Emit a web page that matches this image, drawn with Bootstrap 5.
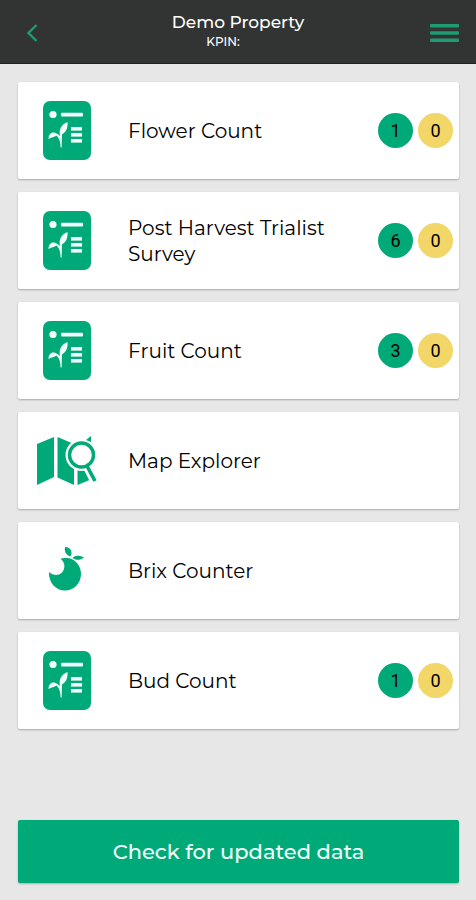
<!DOCTYPE html>
<html lang="en">
<head>
<meta charset="utf-8">
<meta name="viewport" content="width=device-width, initial-scale=1">
<title>Demo Property</title>
<link href="https://cdn.jsdelivr.net/npm/bootstrap@5.3.0/dist/css/bootstrap.min.css" rel="stylesheet">
<style>
  :root { --leaf: #00aa78; --sun: #f2d667; }
  body { background: #e7e7e7; font-family: Montserrat, Inter, "Open Sans", sans-serif; color: #000; }
  .topbar { background: #323433; height: 64px; border-bottom: 1px solid #1e201f; }
  .topbar .btn { color: #1d9c74; width: 64px; height: 64px; }
  .topbar h1 { font-size: 17px; line-height: 20px; font-weight: 500; }
  .kpin { font-size: 12px; line-height: 20px; font-weight: 500; padding-right: 30px; }
  .screen { padding: 18px 17px 17px 18px; }
  .tiles { gap: 13px; }
  .tile { min-height: 97px; border-radius: 2px; box-shadow: 0 1px 2px rgba(0,0,0,.28); color: #000; padding-right: 6px; }
  .tile-icon { width: 98px; }
  .tile-name { font-size: 20px; line-height: 26px; padding-left: 12px; }
  .counts { gap: 5px; margin-left: 40px; }
  .count { width: 35px; height: 35px; font-family: Roboto, sans-serif; font-size: 18px; }
  .count-done { background: var(--leaf); }
  .count-open { background: var(--sun); }
  .btn-update, .btn-update:hover { background: var(--leaf); color: #f2fffa; font-size: 21px; font-weight: 500; height: 63px; border-radius: 2px; border: 0; box-shadow: 0 1px 2px rgba(0,0,0,.25); }
</style>
<script src="https://cdn.jsdelivr.net/npm/bootstrap@5.3.0/dist/js/bootstrap.bundle.min.js" defer></script>
</head>
<body class="min-vh-100 d-flex flex-column">
<svg class="d-none" aria-hidden="true">
  <symbol id="survey" viewBox="0 0 50 60">
    <rect x="1" y="0" width="48" height="59" rx="7" fill="#00aa78"/>
    <g fill="#f3fffb">
      <circle cx="11" cy="13.500" r="3.600"/>
      <rect x="19" y="11.800" width="22" height="3.600" rx="1"/>
      <rect x="29" y="26" width="11" height="3.600"/>
      <rect x="29" y="32" width="11" height="3.600"/>
      <rect x="29" y="38" width="11" height="3.600"/>
      <path d="M25.500 21C20 23 16.500 28 18 34.500C23.500 32 26 28 25.500 21Z"/>
      <path d="M6.500 38C6.500 32 11 29.500 15.500 33L18 35L18.500 31.500L20 32L19.600 46.500H18.600C18.500 41 17.500 37 14.500 34.500C12.500 36.500 9 36 6.500 38Z"/>
    </g>
  </symbol>
</svg>

<header class="topbar d-flex justify-content-between align-items-start">
  <button type="button" class="btn border-0 p-0" aria-label="Back">
    <svg width="12" height="18" viewBox="0 0 12 18" fill="none" stroke="currentColor" stroke-width="2.400"><path d="M10.500 1L2.500 9L10.500 17"/></svg>
  </button>
  <div class="text-center text-white pt-2 mt-1">
    <h1 class="m-0">Demo Property</h1>
    <div class="kpin">KPIN:</div>
  </div>
  <button type="button" class="btn border-0 p-0" aria-label="Menu">
    <svg width="30" height="20" viewBox="0 0 30 20" fill="currentColor"><rect x="1" y="1" width="29" height="3.400" rx="1"/><rect x="1" y="8.300" width="29" height="3.400" rx="1"/><rect x="1" y="15.600" width="29" height="3.400" rx="1"/></svg>
  </button>
</header>

<main class="screen flex-grow-1 d-flex flex-column">
  <nav class="tiles d-flex flex-column" aria-label="Tools">
    <a href="#" class="tile bg-white d-flex align-items-center text-decoration-none">
      <span class="tile-icon text-center flex-shrink-0"><svg width="50" height="60"><use href="#survey"/></svg></span>
      <span class="tile-name flex-grow-1">Flower Count</span>
      <span class="counts d-flex flex-shrink-0"><span class="count count-done rounded-circle d-flex align-items-center justify-content-center">1</span><span class="count count-open rounded-circle d-flex align-items-center justify-content-center">0</span></span>
    </a>
    <a href="#" class="tile bg-white d-flex align-items-center text-decoration-none">
      <span class="tile-icon text-center flex-shrink-0"><svg width="50" height="60"><use href="#survey"/></svg></span>
      <span class="tile-name flex-grow-1">Post Harvest Trialist Survey</span>
      <span class="counts d-flex flex-shrink-0"><span class="count count-done rounded-circle d-flex align-items-center justify-content-center">6</span><span class="count count-open rounded-circle d-flex align-items-center justify-content-center">0</span></span>
    </a>
    <a href="#" class="tile bg-white d-flex align-items-center text-decoration-none">
      <span class="tile-icon text-center flex-shrink-0"><svg width="50" height="60"><use href="#survey"/></svg></span>
      <span class="tile-name flex-grow-1">Fruit Count</span>
      <span class="counts d-flex flex-shrink-0"><span class="count count-done rounded-circle d-flex align-items-center justify-content-center">3</span><span class="count count-open rounded-circle d-flex align-items-center justify-content-center">0</span></span>
    </a>
    <a href="#" class="tile bg-white d-flex align-items-center text-decoration-none">
      <span class="tile-icon text-center flex-shrink-0">
        <svg width="60" height="52" viewBox="0 0 60 52" fill="#00aa78">
          <path d="M0 9L17 2V42L0 50Z"/>
          <path d="M20.500 2L37 9V50L20.500 42.500Z"/>
          <path d="M40.500 22H55V44L40.500 50Z"/>
          <circle cx="44.500" cy="20" r="16" fill="#fff"/>
          <path d="M49 30L59 50" stroke="#fff" stroke-width="8"/>
          <path d="M49 5L54 1V7Z"/>
          <path d="M50 31L58 46" stroke="#00aa78" stroke-width="3.600"/>
          <circle cx="44.500" cy="20" r="12" fill="#fff" stroke="#00aa78" stroke-width="3.400"/>
        </svg>
      </span>
      <span class="tile-name flex-grow-1">Map Explorer</span>
    </a>
    <a href="#" class="tile bg-white d-flex align-items-center text-decoration-none">
      <span class="tile-icon text-center flex-shrink-0">
        <svg width="40" height="52" viewBox="0 0 40 52" fill="#00aa78">
          <path d="M13.500 14C16 12.800 22 12.500 25.500 14.500C30.500 17 34 22.500 34 29C34 38 27 45.500 18 45.500C9 45.500 1.500 38 2 27C6 30.500 11 31 14.500 28C18.500 24.500 18.500 17 13.500 14Z"/>
          <path d="M18 2C24 2.500 26 7 23.500 11.500C19.500 10.500 17 7 18 2Z"/>
          <path d="M25.500 13C28 10 32.500 10 37 12.500C33 15.500 29 15.500 25.500 13Z"/>
        </svg>
      </span>
      <span class="tile-name flex-grow-1">Brix Counter</span>
    </a>
    <a href="#" class="tile bg-white d-flex align-items-center text-decoration-none">
      <span class="tile-icon text-center flex-shrink-0"><svg width="50" height="60"><use href="#survey"/></svg></span>
      <span class="tile-name flex-grow-1">Bud Count</span>
      <span class="counts d-flex flex-shrink-0"><span class="count count-done rounded-circle d-flex align-items-center justify-content-center">1</span><span class="count count-open rounded-circle d-flex align-items-center justify-content-center">0</span></span>
    </a>
  </nav>
  <button type="button" class="btn btn-update w-100 mt-auto">Check for updated data</button>
</main>
</body>
</html>
